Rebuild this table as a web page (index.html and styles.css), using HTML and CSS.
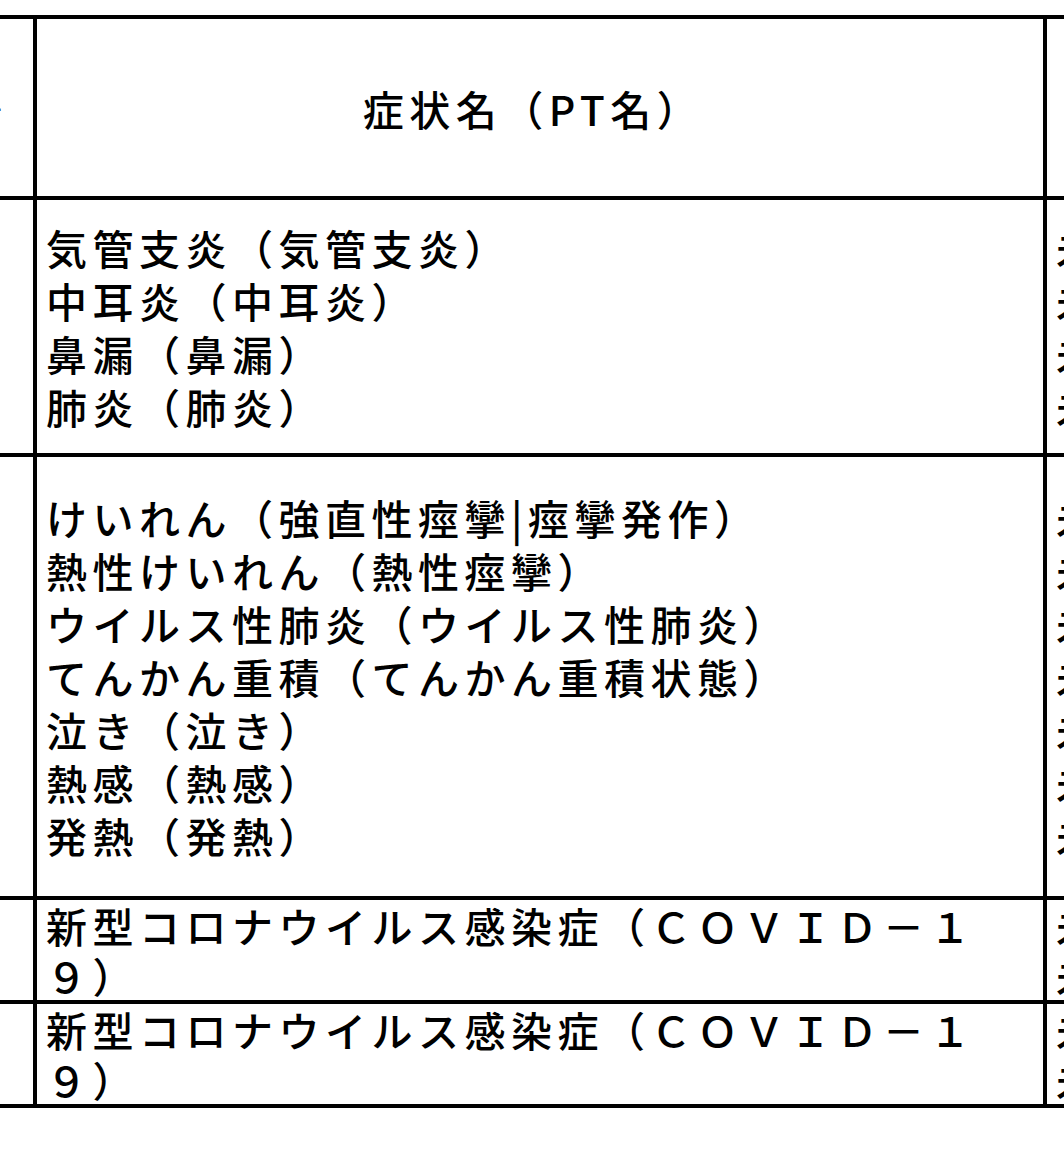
FILE: index.html
```html
<!DOCTYPE html>
<html lang="ja">
<head>
<meta charset="utf-8">
<title>症状名（PT名）</title>
<link rel="stylesheet" href="styles.css">
</head>
<body>
<div class="sheet">
  <div class="table">
    <div class="cell side head-side"><span class="cut">番号</span></div>
    <div class="cell main head">症状名（PT名）</div>
    <div class="cell right"></div>

    <div class="cell side"></div>
    <div class="cell main mid">
      <div class="ln">気管支炎（気管支炎）</div>
      <div class="ln">中耳炎（中耳炎）</div>
      <div class="ln">鼻漏（鼻漏）</div>
      <div class="ln">肺炎（肺炎）</div>
    </div>
    <div class="cell right mid">
      <div class="ln">未回復</div>
      <div class="ln">未回復</div>
      <div class="ln">未回復</div>
      <div class="ln">未回復</div>
    </div>

    <div class="cell side"></div>
    <div class="cell main mid">
      <div class="ln">けいれん（強直性痙攣|痙攣発作）</div>
      <div class="ln">熱性けいれん（熱性痙攣）</div>
      <div class="ln">ウイルス性肺炎（ウイルス性肺炎）</div>
      <div class="ln">てんかん重積（てんかん重積状態）</div>
      <div class="ln">泣き（泣き）</div>
      <div class="ln">熱感（熱感）</div>
      <div class="ln">発熱（発熱）</div>
    </div>
    <div class="cell right mid">
      <div class="ln">未回復</div>
      <div class="ln">未回復</div>
      <div class="ln">未回復</div>
      <div class="ln">未回復</div>
      <div class="ln">未回復</div>
      <div class="ln">未回復</div>
      <div class="ln">未回復</div>
    </div>

    <div class="cell side"></div>
    <div class="cell main top">
      <div class="ln tight">新型コロナウイルス感染症（ＣＯＶＩＤ－１</div>
      <div class="ln tight">９）</div>
    </div>
    <div class="cell right top">
      <div class="ln tight">未回復</div>
      <div class="ln tight">未回復</div>
    </div>

    <div class="cell side"></div>
    <div class="cell main top">
      <div class="ln tight">新型コロナウイルス感染症（ＣＯＶＩＤ－１</div>
      <div class="ln tight">９）</div>
    </div>
    <div class="cell right top">
      <div class="ln tight">未回復</div>
      <div class="ln tight">未回復</div>
    </div>
  </div>
</div>
</body>
</html>
```

FILE: styles.css
```css
html, body {
  margin: 0;
  padding: 0;
  background: #fff;
}

.sheet {
  width: 1064px;
  height: 1152px;
  overflow: hidden;
  background: #fff;
  padding-top: 15px;
  box-sizing: border-box;
  font-family: "Noto Sans CJK JP", "Noto Sans", sans-serif;
  color: #000;
}

.table {
  display: grid;
  grid-template-columns: 93px 1006px 300px;
  grid-template-rows: 177px 253px 439px 100px 100px;
  gap: 4px;
  padding: 4px;
  background: #000;
  margin-left: -64px;
  width: max-content;
}

.cell {
  background: #fff;
  overflow: hidden;
  font-size: 41px;
  font-weight: 500;
  letter-spacing: 5.5px;
  white-space: nowrap;
}

.side {
  display: flex;
  align-items: center;
  justify-content: flex-end;
}

.head-side .cut {
  padding-right: 31px;
  font-size: 30px;
  letter-spacing: 0;
  color: #1b3d6b;
}

.main {
  padding-left: 9px;
}

.right {
  padding-left: 9px;
}

.head {
  display: flex;
  align-items: center;
  justify-content: center;
  padding-left: 0;
  padding-right: 14px;
  font-size: 41px;
  letter-spacing: 5.5px;
}

.mid {
  display: flex;
  flex-direction: column;
  justify-content: center;
}

.top {
  display: flex;
  flex-direction: column;
  justify-content: flex-start;
}

.ln {
  line-height: 53px;
  height: 53px;
}

.ln.tight {
  line-height: 50px;
  height: 50px;
}
```
